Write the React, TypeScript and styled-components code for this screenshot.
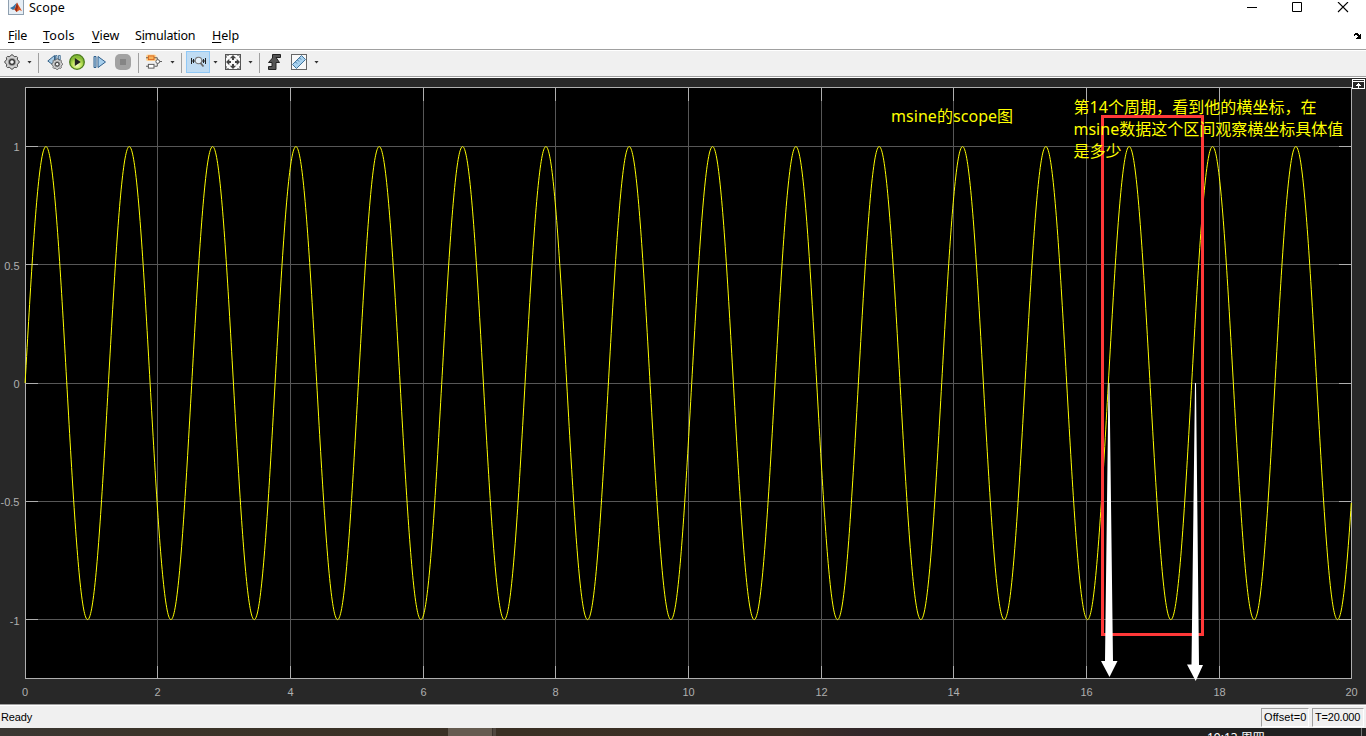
import React from 'react';
import styled, { createGlobalStyle } from 'styled-components';

const GlobalStyle = createGlobalStyle`
  * { box-sizing: border-box; }
  body { margin: 0; background: #fff; overflow: hidden; }
`;

const uiFont = `'Noto Sans', 'Noto Sans CJK SC', sans-serif`;
const axisFont = `'Liberation Sans', Arial, sans-serif`;

const Window = styled.div`
  position: relative;
  width: 1366px;
  height: 736px;
  display: flex;
  flex-direction: column;
  overflow: hidden;
  background: #fff;
  color: #000;
  font-family: ${uiFont};
`;

const TitleBar = styled.header`
  height: 22px;
  flex: none;
  display: flex;
  align-items: flex-start;
  padding-left: 8px;
`;

const Title = styled.span`
  font-size: 12.5px;
  letter-spacing: 0.15px;
  line-height: 16px;
  margin-left: 5px;
  flex: 1;
`;

const WindowButtons = styled.div`
  display: flex;
  gap: 34px;
  padding: 2px 17px 0 0;
`;

const MenuBar = styled.nav`
  height: 27px;
  flex: none;
  display: flex;
  padding: 5px 4px 0 8px;
`;

const MenuItem = styled.span<{ $w: number; $spacing?: number }>`
  width: ${p => p.$w}px;
  font-size: 12.5px;
  letter-spacing: ${p => p.$spacing ?? 0}px;
  line-height: 18px;
  white-space: nowrap;
`;

const Mnemonic = styled.span`
  text-decoration: underline;
  text-underline-offset: 2px;
  text-decoration-thickness: 1px;
`;

const DockArrow = styled.svg`
  margin: 6px 0 0 auto;
`;

const Toolbar = styled.div`
  height: 28px;
  flex: none;
  display: flex;
  align-items: center;
  background: #f0f0f0;
  border-top: 1px solid #a0a0a0;
  border-bottom: 1px solid #a0a0a0;
  box-shadow: inset 0 1px #fff;
  padding: 0 0 2px 4px;
`;

const ToolButton = styled.div<{ $ml?: number; $active?: boolean }>`
  width: ${p => (p.$active ? 24 : 16)}px;
  height: ${p => (p.$active ? 22 : 16)}px;
  margin-left: ${p => p.$ml ?? 0}px;
  display: flex;
  align-items: center;
  justify-content: center;
  background: ${p => (p.$active ? '#c0dcf3' : 'transparent')};
  border: ${p => (p.$active ? '1px solid #90c8f6' : 'none')};
`;

const Caret = styled.i<{ $ml: number }>`
  width: 5px;
  height: 3px;
  margin-left: ${p => p.$ml}px;
  background: #333;
  clip-path: polygon(0 0, 100% 0, 50% 100%);
`;

const Separator = styled.i<{ $ml: number }>`
  width: 1px;
  height: 20px;
  margin-top: 2px;
  margin-left: ${p => p.$ml}px;
  background: #a0a0a0;
`;

const ScopeArea = styled.main`
  height: 627px;
  flex: none;
  position: relative;
  background: #282828;
  border-top: 1px solid #fff;
`;

const Plot = styled.svg`
  display: block;
  font-family: ${axisFont};
  font-size: 11px;
`;

const Note = styled.div<{ $x: number; $y: number }>`
  position: absolute;
  left: ${p => p.$x}px;
  top: ${p => p.$y}px;
  color: #ff0;
  font-family: 'Noto Sans', 'Noto Sans CJK SC', sans-serif;
  font-size: 16px;
  line-height: 22px;
  white-space: pre;
`;

const NoteLine = styled.div<{ $spacing?: number }>`
  height: 22px;
  letter-spacing: ${p => p.$spacing ?? 0}px;
`;

const StatusBar = styled.footer`
  height: 24px;
  flex: none;
  display: flex;
  justify-content: space-between;
  background: #f0f0f0;
  border-top: 1px solid #a0a0a0;
  box-shadow: inset 0 1px #fff;
  font-family: ${axisFont};
  font-size: 11px;
  padding: 3px 2px 0 1px;
`;

const StatusText = styled.span`
  line-height: 18px;
  letter-spacing: -0.15px;
`;

const StatusCells = styled.div`
  display: flex;
  gap: 3px;
`;

const StatusCell = styled.span<{ $w: number; $spacing: number }>`
  width: ${p => p.$w}px;
  height: 19px;
  padding-left: 2px;
  line-height: 17px;
  letter-spacing: ${p => p.$spacing}px;
  white-space: nowrap;
  border: 1px solid #fff;
  border-top-color: #a0a0a0;
  border-left-color: #a0a0a0;
`;

const Taskbar = styled.div`
  height: 8px;
  flex: none;
  display: flex;
  overflow: hidden;
  background: linear-gradient(90deg, #3a3733 0, #3b342a 140px, #3a3024 500px, #3b2f25 790px, #33272a 860px, #2c2622 950px, #202020 1130px, #202020 100%);
`;

const TaskItem = styled.i`
  width: 48px;
  margin-left: 448px;
  background: linear-gradient(90deg, #655b50 44px, #3a342d 44px, #3a342d 45px, #4f473f 45px);
`;

const Clock = styled.span`
  margin-left: 711px;
  margin-top: 2px;
  color: #fff;
  font-size: 12px;
  line-height: 16px;
  white-space: nowrap;
`;

const TaskEdge = styled.i`
  width: 1px;
  margin: 0 4px 0 auto;
  background: #777;
`;

const gridX = [157, 290, 423, 555, 688, 821, 953, 1086, 1219];
const gridY = [146, 264, 383, 501, 619];
const yLabels = [
  { text: '1', y: 151 },
  { text: '0.5', y: 270 },
  { text: '0', y: 388 },
  { text: '-0.5', y: 506 },
  { text: '-1', y: 625 },
];
const TOP = 78;

const wave = Array.from({ length: 2653 }, (_, i) => {
  const t = (i / 2652) * 20;
  return `${(25.1 + t * 66.31).toFixed(2)},${(383.1 - 236.5 * Math.sin(5 * t)).toFixed(2)}`;
}).join(' ');

const gearPath = Array.from({ length: 32 }, (_, i) => {
  const r = i % 4 < 2 ? 7.2 : 6;
  const a = ((i - 0.5) / 32) * Math.PI * 2;
  return `${(8 + r * Math.cos(a)).toFixed(2)},${(8 + r * Math.sin(a)).toFixed(2)}`;
}).join(' ');

const Gear = () => (
  <>
    <polygon points={gearPath} fill="#d2d2d2" stroke="#484848" strokeWidth="1" />
    <circle cx="8" cy="8" r="3.6" fill="#777" stroke="#999" />
    <circle cx="8" cy="8" r="2.4" fill="#f4f4f4" stroke="#333" strokeWidth="1.2" />
  </>
);

const MatlabIcon = () => (
  <svg width="16" height="16" viewBox="0 0 16 16">
    <rect x=".5" y="-1" width="15" height="15.5" fill="#e6eef5" stroke="#8fa0b0" />
    <path d="M2 8l3-1.500L8.500 3 7 8.500 5 10z" fill="#3273a8" />
    <path d="M5 10l2-1.500L9 2.500l2 3.500 3 5-2.500-1L8.500 12 7 9.800z" fill="#d9531e" />
    <path d="M9 2.500L10 7l-1.500 5L7 9.800z" fill="#8d2a1b" />
  </svg>
);

function App() {
  return (
    <Window>
      <GlobalStyle />
      <TitleBar>
        <MatlabIcon />
        <Title>Scope</Title>
        <WindowButtons>
          <svg width="12" height="12" viewBox="0 0 12 12"><path d="M2 5.5h10" stroke="#000" /></svg>
          <svg width="12" height="12" viewBox="0 0 12 12"><path d="M1.5.5h9v9h-9z" fill="none" stroke="#000" /></svg>
          <svg width="12" height="12" viewBox="0 0 12 12"><path d="M1 0l10 10M11 0L1 10" stroke="#000" strokeWidth="1.1" /></svg>
        </WindowButtons>
      </TitleBar>
      <MenuBar>
        <MenuItem $w={35} $spacing={-0.2}><Mnemonic>F</Mnemonic>ile</MenuItem>
        <MenuItem $w={49} $spacing={0.25}><Mnemonic>T</Mnemonic>ools</MenuItem>
        <MenuItem $w={43}><Mnemonic>V</Mnemonic>iew</MenuItem>
        <MenuItem $w={77} $spacing={-0.25}>S<Mnemonic>i</Mnemonic>mulation</MenuItem>
        <MenuItem $w={40}><Mnemonic>H</Mnemonic>elp</MenuItem>
        <DockArrow width="8" height="6" viewBox="0 0 8 6" shapeRendering="crispEdges">
          <path d="M1 0h3v1h1v1h1V1h1v5H2V5h1V4h1V3H3V2H1v1H0V1h1z" fill="#000" />
        </DockArrow>
      </MenuBar>

      <Toolbar>
        <ToolButton><svg width="16" height="16"><Gear /></svg></ToolButton>
        <Caret $ml={7} />
        <Separator $ml={6} />
        <ToolButton $ml={8}>
          <svg width="16" height="16" viewBox="0 0 16 16">
            <path d="M7.500 1.500L.8 7l6.700 5z" fill="#a9cbe4" stroke="#38648a" />
            <path d="M8.500 1.500h1.500v4h-1.500zM11.500 1.500h1.800v4h-1.800z" fill="#c4dcee" stroke="#38648a" strokeWidth=".8" />
            <g transform="translate(4.200 4.200) scale(.75)"><Gear /></g>
          </svg>
        </ToolButton>
        <ToolButton $ml={6}>
          <svg width="16" height="16" viewBox="0 0 16 16">
            <defs><radialGradient id="run" cy=".7"><stop offset="0" stopColor="#f8ffd0" /><stop offset=".6" stopColor="#c0e45c" /><stop offset="1" stopColor="#86bb38" /></radialGradient></defs>
            <circle cx="8" cy="8" r="7.300" fill="url(#run)" stroke="#4c7d1c" strokeWidth="1.300" />
            <path d="M5.800 4l6 4-6 4z" fill="#222" />
          </svg>
        </ToolButton>
        <ToolButton $ml={7}>
          <svg width="16" height="16" viewBox="0 0 16 16">
            <path d="M2 2.500h2v11H2z" fill="#b9d8ee" stroke="#2f5f8c" />
            <path d="M6 2.500v11L13.500 8z" fill="#a7cfec" stroke="#2f5f8c" />
          </svg>
        </ToolButton>
        <ToolButton $ml={7}>
          <svg width="16" height="16"><rect width="16" height="16" rx="5" fill="#a2a2a2" /><rect x="5" y="5" width="6" height="6" fill="#858585" /></svg>
        </ToolButton>
        <Separator $ml={7} />
        <ToolButton $ml={7}>
          <svg width="17" height="16" viewBox="0 0 17 16">
            <rect x="0" y="0" width="11" height="7" rx="2" fill="#ffd79a" />
            <path d="M0 3.500h3M8 3.500h4v2M12 9v3.500H9M0 12.500h3" fill="none" stroke="#555" />
            <rect x="2.500" y="1.500" width="6" height="4" fill="#f8b35c" stroke="#d7641a" />
            <rect x="2.500" y="10.500" width="6" height="4" fill="#fff" stroke="#555" />
            <circle cx="12.500" cy="7.500" r="2" fill="#fff" stroke="#555" /><path d="M14.500 7.500H17" stroke="#555" />
          </svg>
        </ToolButton>
        <Caret $ml={8} />
        <Separator $ml={6} />
        <ToolButton $ml={4} $active>
          <svg width="17" height="16" viewBox="0 0 17 16">
            <path d="M1.500 4v6M15.500 4v6M1 7h4M12 7h4M3.500 5v4M13.500 5v4" stroke="#222" />
            <circle cx="8.500" cy="6.500" r="3.300" fill="#e5f1fa" stroke="#777" strokeWidth="1.100" />
            <path d="M10.500 9l3 3.500" stroke="#666" strokeWidth="1.800" />
          </svg>
        </ToolButton>
        <Caret $ml={3} />
        <ToolButton $ml={7}>
          <svg width="16" height="16" viewBox="0 0 16 16">
            <rect x=".5" y=".5" width="15" height="15" fill="#fafafa" stroke="#555" />
            <path d="M8 1l3.200 3.300H9V6H7V4.300H4.800zM8 15l3.200-3.300H9V10H7v1.700H4.800zM1 8l3.300-3.200V7H6v2H4.300v2.200zM15 8l-3.300-3.200V7H10v2h1.700v2.200z" fill="#444" />
            <path d="M1.500 4V1.500H4M12 1.500h2.500V4M1.500 12v2.500H4M12 14.500h2.500V12" stroke="#999" fill="none" />
          </svg>
        </ToolButton>
        <Caret $ml={7} />
        <Separator $ml={6} />
        <ToolButton $ml={7}>
          <svg width="16" height="16" viewBox="0 0 16 16">
            <path d="M1.500 12.500h3.500v-4H1.500L5.500 4V.5h8V3.500h-4.500L12.500 8.500H9v7H1.500z" fill="#555" stroke="#222" />
          </svg>
        </ToolButton>
        <ToolButton $ml={8}>
          <svg width="16" height="16" viewBox="0 0 16 16">
            <rect x=".5" y=".5" width="15" height="15" fill="#f8f8f8" stroke="#666" />
            <path d="M1.500 10.500L10.500 1.500l4 4L5.500 14.500z" fill="#a9d2ef" stroke="#40749c" />
            <path d="M4.500 8l1.500 1.500M6.500 6L8 7.500M8.500 4L10 5.500" stroke="#40749c" />
          </svg>
        </ToolButton>
        <Caret $ml={7} />
      </Toolbar>

      <ScopeArea>
        <Plot width="1366" height="626" viewBox={`0 ${TOP} 1366 626`}>
          <g shapeRendering="crispEdges" fill="none">
            <rect x="25" y="87" width="1327" height="592" fill="#000" />
            {gridX.map(x => <path key={x} d={`M${x + 0.5} 87V679`} stroke="#575757" />)}
            {gridY.map(y => <path key={y} d={`M25 ${y + 0.5}H1352`} stroke="#575757" />)}
            {gridX.map(x => <path key={x} d={`M${x + 0.5} 88v13M${x + 0.5} 666v13`} stroke="#afafaf" />)}
            {gridY.map(y => <path key={y} d={`M26 ${y + 0.5}h12M1339 ${y + 0.5}h13`} stroke="#afafaf" />)}
            <rect x="25.500" y="87.500" width="1326" height="591" stroke="#afafaf" />
          </g>
          <polyline points={wave} fill="none" stroke="#ff0" strokeWidth="1" />
          <g fill="#afafaf" textAnchor="end">
            {yLabels.map(l => <text key={l.text} x="19.500" y={l.y}>{l.text}</text>)}
          </g>
          <g fill="#afafaf" textAnchor="middle">
            {[24.5, ...gridX, 1351].map((x, i) => <text key={x} x={x + 0.6} y="696">{i * 2}</text>)}
          </g>
          <rect x="1102.500" y="116.500" width="100" height="518" fill="none" stroke="#ff3838" strokeWidth="3" />
          <path d="M1108.500 383h1L1113 661h4.500L1109.500 677 1101 661h4z" fill="#fff" />
          <path d="M1195 383h1L1199 665h4L1195.700 681 1187 664.500h4.500z" fill="#fff" />
          <g shapeRendering="crispEdges" fill="none" stroke="#fff">
            <rect x="1352.500" y="79.500" width="12" height="9" fill="#282828" />
            <path d="M1353 81.500h11M1358.500 83v5M1357 84.500h3M1356 85.500h5" />
          </g>
        </Plot>
        <Note $x={891} $y={27}><NoteLine $spacing={0.05}>msine的scope图</NoteLine></Note>
        <Note $x={1073.5} $y={18}>
          <NoteLine $spacing={0.05}>第14个周期，看到他的横坐标，在</NoteLine>
          <NoteLine>msine数据这个区间观察横坐标具体值</NoteLine>
          <NoteLine>是多少</NoteLine>
        </Note>
      </ScopeArea>

      <StatusBar>
        <StatusText>Ready</StatusText>
        <StatusCells>
          <StatusCell $w={48} $spacing={0.1}>Offset=0</StatusCell>
          <StatusCell $w={52} $spacing={-0.2}>T=20.000</StatusCell>
        </StatusCells>
      </StatusBar>
      <Taskbar>
        <TaskItem />
        <Clock>19:13 周四</Clock>
        <TaskEdge />
      </Taskbar>
    </Window>
  );
}

export default App;
